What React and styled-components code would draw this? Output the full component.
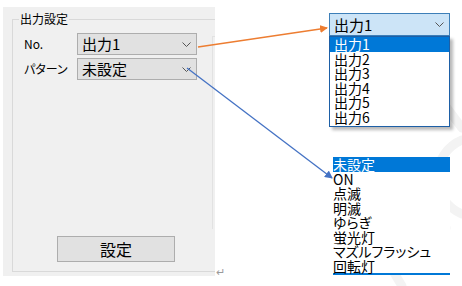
import React from 'react'
import styled, { createGlobalStyle } from 'styled-components'

const Global = createGlobalStyle`
  html, body { margin: 0; padding: 0; background: #fff; }
  body { font-family: "Noto Sans CJK JP", "Noto Sans", sans-serif; color: #000; }
`

const Page = styled.div`
  position: relative;
  width: 462px;
  height: 286px;
  overflow: hidden;
  display: flex;
  align-items: flex-start;
`
const Backdrop = styled.svg`
  position: absolute;
  left: 0;
  top: 0;
  z-index: 0;
`
const Overlay = styled.svg`
  position: absolute;
  left: 0;
  top: 0;
  z-index: 5;
  pointer-events: none;
`
const LeftWrap = styled.div`
  display: flex;
  align-items: flex-end;
  height: 276px;
  position: relative;
  z-index: 1;
`
const Panel = styled.div`
  margin: 7px 0 0 3px;
  width: 212px;
  height: 269px;
  background: #f0f0f0;
  overflow: hidden;
  padding: 12px 0 0 9px;
  box-sizing: border-box;
`
const Group = styled.div`
  position: relative;
  width: 203px;
  height: 253px;
  box-sizing: border-box;
  border: 1px solid #d9d9d9;
  border-right: none;
  padding: 13px 0 9px 11px;
  display: flex;
`
const Legend = styled.span`
  position: absolute;
  top: -9px;
  left: 6px;
  padding: 0 1px;
  background: #f0f0f0;
  font-size: 12px;
  line-height: 16px;
  font-feature-settings: "palt";
`
const Main = styled.div`
  flex: 1;
  display: flex;
  flex-direction: column;
`
const Rail = styled.div`
  width: 3px;
  margin-top: 3px;
  height: 193px;
  border-left: 1px solid #e2e2e2;
  border-top: 1px solid #e2e2e2;
  box-sizing: border-box;
`
const Form = styled.div`
  display: grid;
  grid-template-columns: 53px 120px;
  grid-auto-rows: 22px;
  row-gap: 3px;
`
const Label = styled.span`
  align-self: center;
  font-size: 12px;
  line-height: 14px;
  font-feature-settings: "palt";
`
const Combo = styled.div`
  box-sizing: border-box;
  display: flex;
  align-items: center;
  justify-content: space-between;
  padding: 0 5px 0 4px;
  border: 1px solid ${p => (p.$open ? '#3d7fb8' : '#adadad')};
  background: ${p => (p.$open ? '#cce4f7' : '#e1e1e1')};
  font-size: 15px;
  line-height: 18px;
  height: ${p => (p.$open ? '23px' : '22px')};
`
const Button = styled.div`
  margin-top: auto;
  margin-left: 33px;
  width: 118px;
  height: 26px;
  box-sizing: border-box;
  border: 1px solid #adadad;
  background: #e1e1e1;
  display: flex;
  align-items: center;
  justify-content: center;
  font-size: 16px;
`
const Mark = styled.span`
  font-size: 11px;
  line-height: 10px;
  color: #9a9a9a;
  margin-left: 1px;
`
const RightCol = styled.div`
  position: relative;
  z-index: 1;
  margin-left: 104px;
  padding-top: 13px;
  display: flex;
  flex-direction: column;
`
const Dropdown = styled.div`
  width: 121px;
  display: flex;
  flex-direction: column;
`
const List = styled.div`
  border: 1px solid #1d5fa6;
  background: #fff;
  box-shadow: 3px 3px 3px rgba(0, 0, 0, 0.28);
  padding-bottom: 2px;
`
const Item = styled.div`
  height: 14.5px;
  line-height: 14.5px;
  font-size: 14px;
  padding-left: ${p => p.$pad}px;
  white-space: nowrap;
  font-feature-settings: "palt";
  background: ${p => (p.$sel ? '#0078d7' : 'transparent')};
  color: ${p => (p.$sel ? '#fff' : '#000')};
`
const Open = styled.div`
  margin: 30px 0 0 4px;
  width: 117px;
  background: #fff;
  border-bottom: 2px solid #0078d7;
`

const Chevron = () => (
  <svg width="9" height="5" viewBox="0 0 9 5">
    <path d="M0.5 0.5 L4.5 4.5 L8.5 0.5" fill="none" stroke="#555" strokeWidth="1" />
  </svg>
)

const outputs = ['出力1', '出力2', '出力3', '出力4', '出力5', '出力6']
const patterns = ['未設定', 'ON', '点滅', '明滅', 'ゆらぎ', '蛍光灯', 'マズルフラッシュ', '回転灯']

const App = () => {
  return (
    <Page>
      <Global />
      <Backdrop width="462" height="286">
        <g fill="none" stroke="#f3f3f3" strokeWidth="9" strokeLinecap="round">
          <path d="M438 96 L462 128" />
          <path d="M462 140 A40 40 0 0 0 462 214" />
          <path d="M424 196 L446 228" />
          <path d="M372 236 L402 286" />
        </g>
      </Backdrop>
      <LeftWrap>
        <Panel>
          <Group>
            <Legend>出力設定</Legend>
            <Main>
              <Form>
                <Label>No.</Label>
                <Combo>
                  <span>出力1</span>
                  <Chevron />
                </Combo>
                <Label>パターン</Label>
                <Combo>
                  <span>未設定</span>
                  <Chevron />
                </Combo>
              </Form>
              <Button>設定</Button>
            </Main>
            <Rail />
          </Group>
        </Panel>
        <Mark>↵</Mark>
      </LeftWrap>
      <RightCol>
        <Dropdown>
          <Combo $open>
            <span>出力1</span>
            <Chevron />
          </Combo>
          <List>
            {outputs.map((o, i) => (
              <Item key={o} $pad={4} $sel={i === 0}>{o}</Item>
            ))}
          </List>
        </Dropdown>
        <Open>
          {patterns.map((p, i) => (
            <Item key={p} $pad={0} $sel={i === 0}>{p}</Item>
          ))}
        </Open>
      </RightCol>
      <Overlay width="462" height="286">
        <defs>
          <marker id="ao" markerWidth="8" markerHeight="8" refX="7" refY="4" orient="auto" markerUnits="userSpaceOnUse">
            <path d="M0 0 L8 4 L0 8 Z" fill="#ed7d31" />
          </marker>
          <marker id="ab" markerWidth="8" markerHeight="8" refX="7" refY="4" orient="auto" markerUnits="userSpaceOnUse">
            <path d="M0 0 L8 4 L0 8 Z" fill="#4472c4" />
          </marker>
        </defs>
        <line x1="198" y1="47" x2="327" y2="28" stroke="#ed7d31" strokeWidth="1.3" markerEnd="url(#ao)" />
        <line x1="187" y1="68" x2="332" y2="178" stroke="#4472c4" strokeWidth="1.3" markerEnd="url(#ab)" />
      </Overlay>
    </Page>
  )
}

export default App
